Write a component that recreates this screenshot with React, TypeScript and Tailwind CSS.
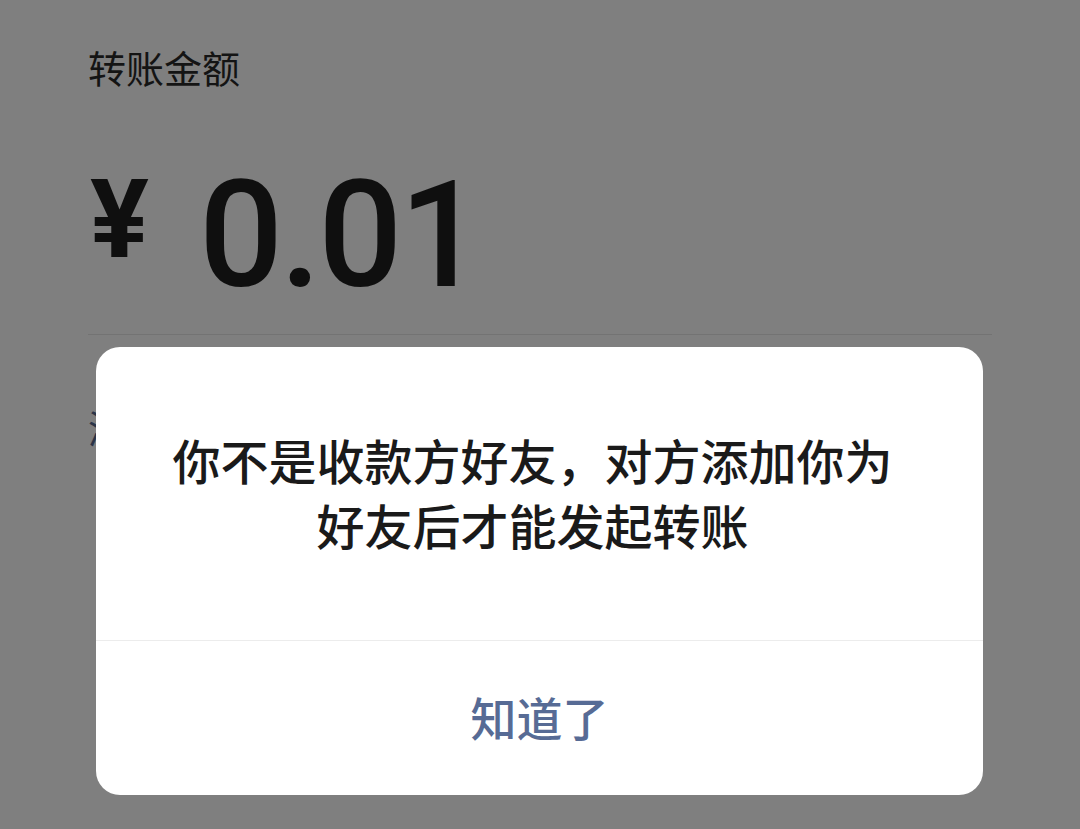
import React from 'react';

const cjk = { fontFamily: '"Noto Sans CJK SC", "Noto Sans", sans-serif' };

export default function App() {
  return (
    <div
      className="relative h-[829px] w-[1080px] overflow-hidden bg-[#7f7f7f] font-['Noto_Sans_CJK_SC',sans-serif]"
      style={cjk}
    >
      {/* 底层：转账页面（已被遮罩变暗） */}
      <div className="px-[88px] pt-[45px]">
        <div className="text-[38px] leading-[44px] text-[#141414]">转账金额</div>

        <div className="mt-[81px] flex items-start">
          <span className="ml-[2px] mt-[10px] font-['Roboto',sans-serif] text-[110px] font-bold leading-[80px] text-[#0f0f0f]">
            ¥
          </span>
          <span className="ml-[50px] mt-[6px] font-['Roboto',sans-serif] text-[148px] font-medium leading-[120px] tracking-[-3px] text-[#0f0f0f]">
            0.01
          </span>
        </div>

        <div className="mt-[38px] h-px bg-[#737373]" />

        <div className="mt-[70px] text-[38px] leading-[44px] text-[#2b3447]">添加转账说明</div>
      </div>

      {/* 弹窗 */}
      <div className="absolute left-[96px] top-[347px] flex h-[448px] w-[887px] flex-col overflow-hidden rounded-[24px] bg-white">
        <div className="flex flex-1 items-center justify-center pb-[4px] pl-[43px] pr-[57px] text-center text-[48px] font-medium leading-[65px] text-[#1a1a1a]">
          <p>
            你不是收款方好友，对方添加你为
            <br />
            好友后才能发起转账
          </p>
        </div>
        <div className="h-px bg-[#ececec]" />
        <div className="flex h-[154px] items-center justify-center pb-[4px] text-[46px] font-medium text-[#576b95]">
          知道了
        </div>
      </div>
    </div>
  );
}
